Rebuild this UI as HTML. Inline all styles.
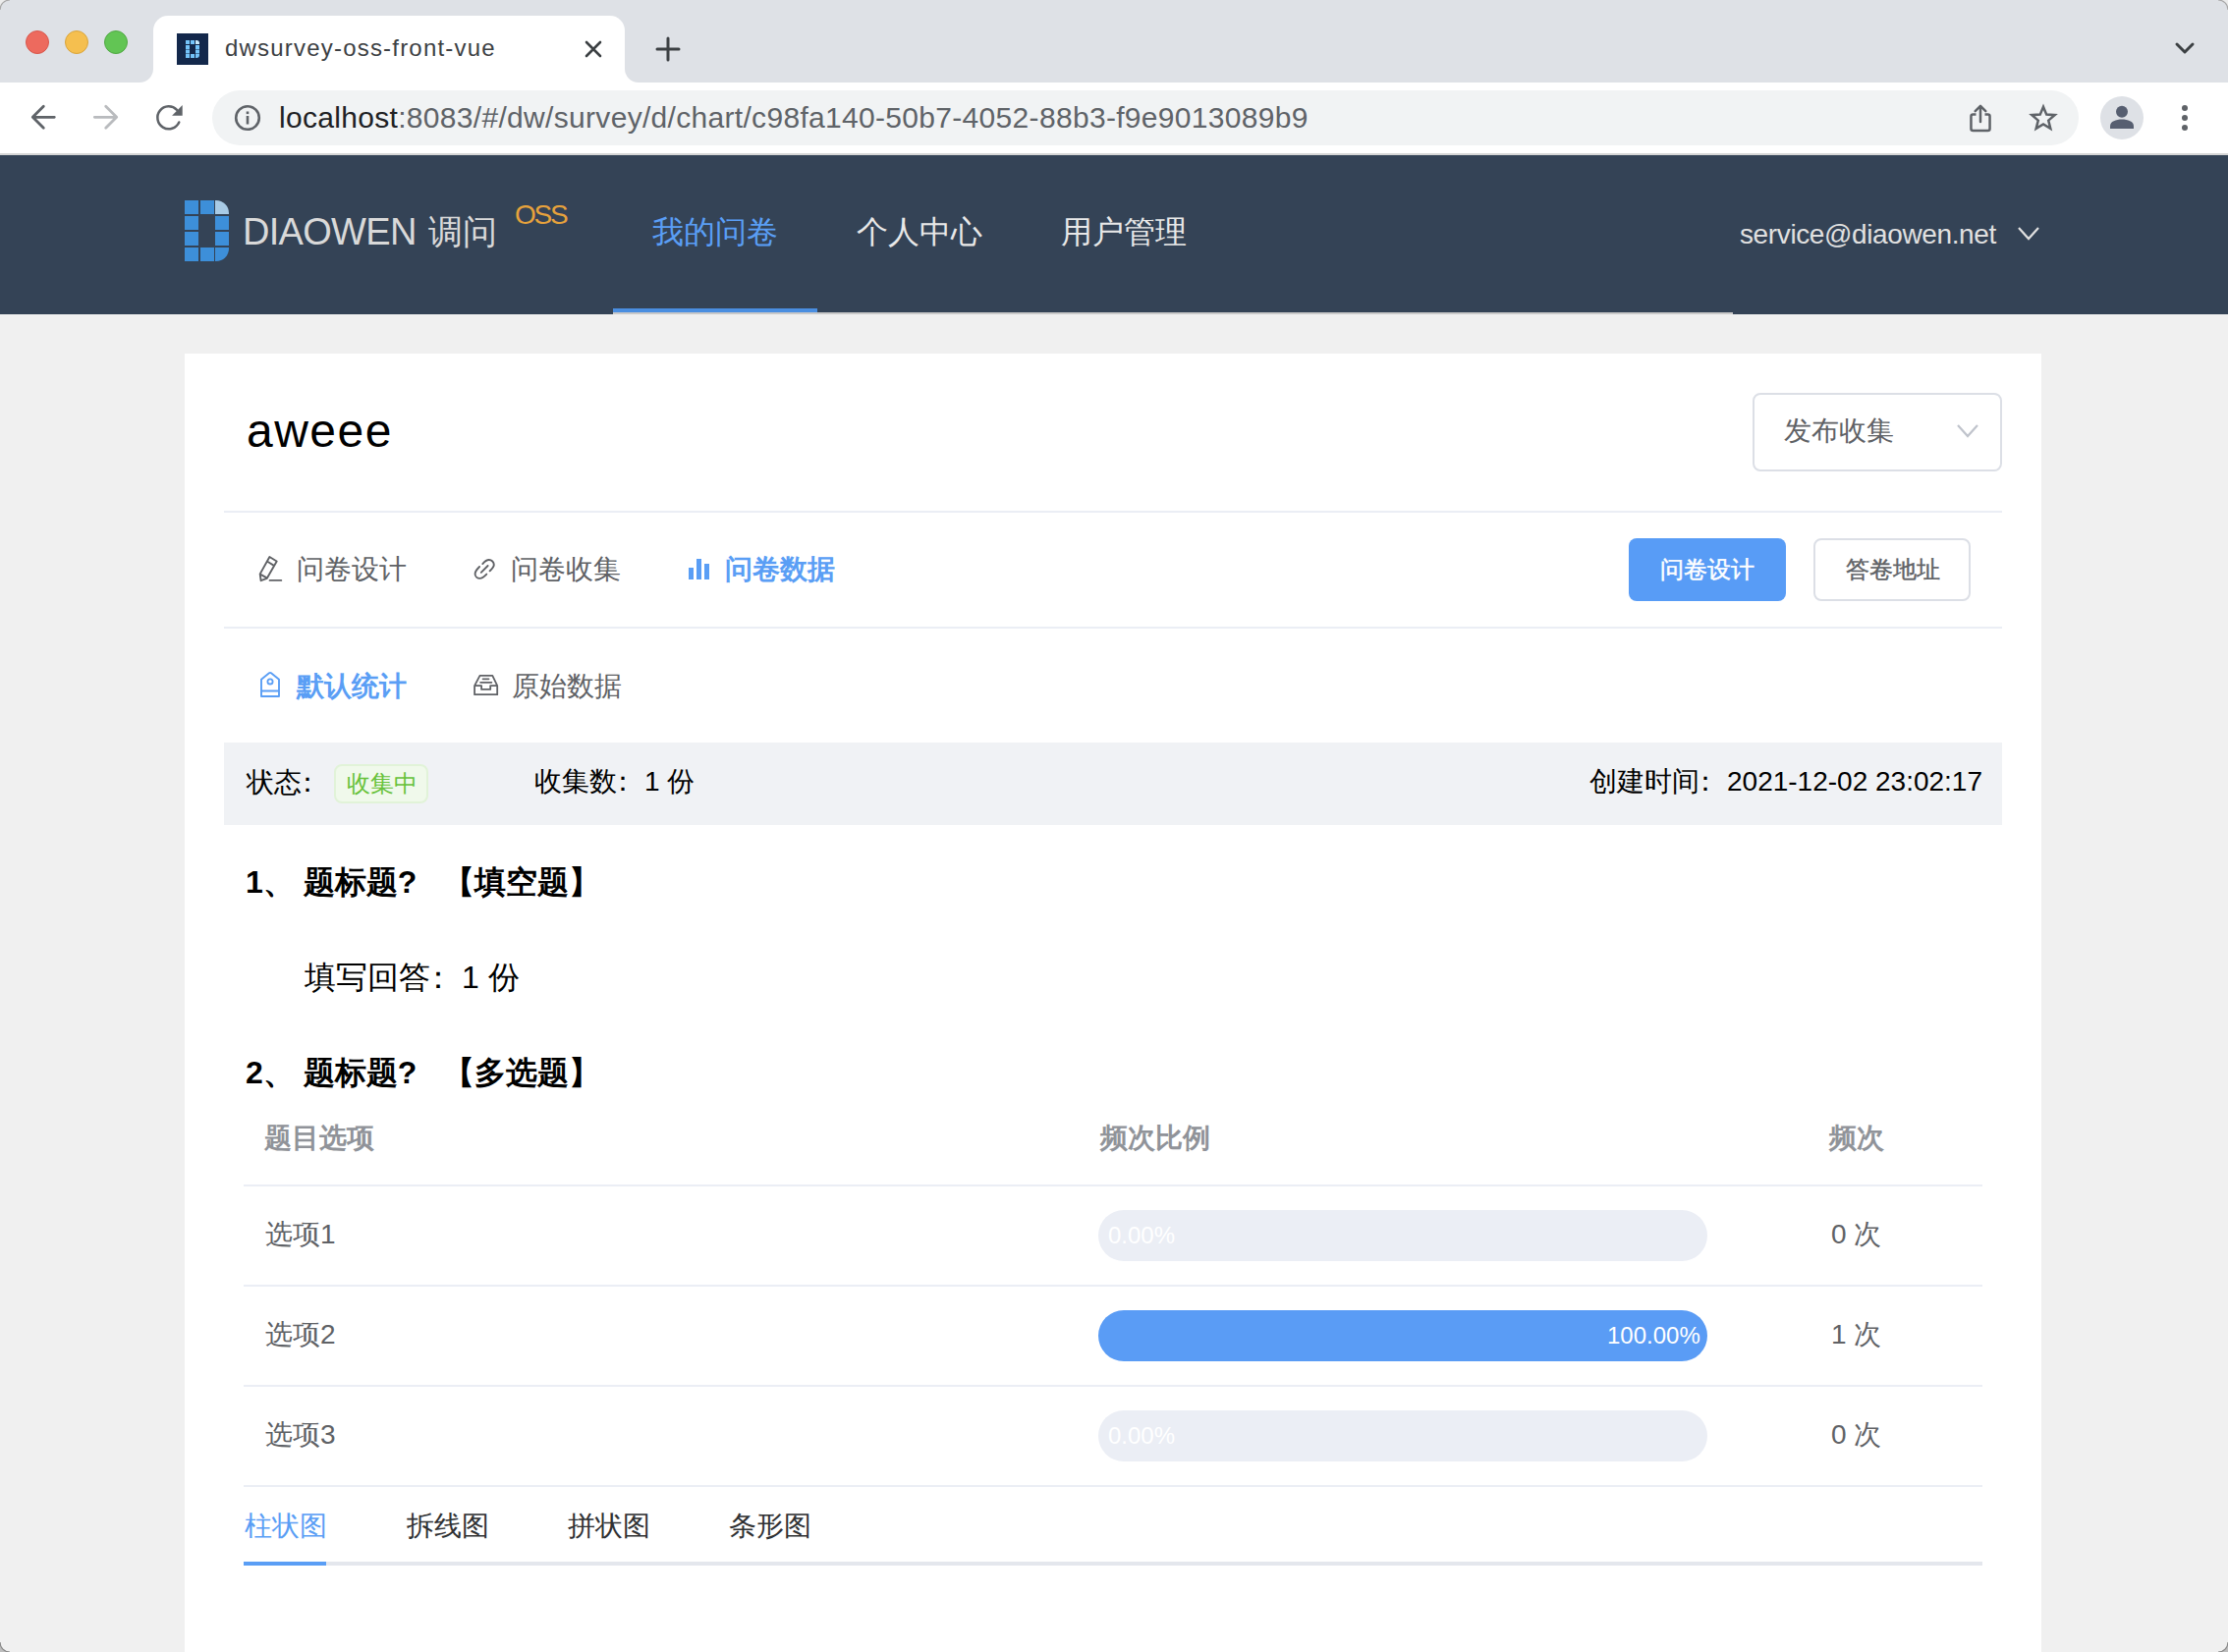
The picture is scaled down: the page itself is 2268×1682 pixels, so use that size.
<!DOCTYPE html>
<html><head><meta charset="utf-8">
<style>
*{margin:0;padding:0;box-sizing:border-box}
html,body{width:2268px;height:1682px;overflow:hidden;background:#f0f0f0;font-family:"Liberation Sans",sans-serif;position:relative}
.a{position:absolute;white-space:nowrap}
#strip{left:0;top:0;width:2268px;height:84px;background:#dee1e6}
#tab{left:156px;top:16px;width:480px;height:68px;background:#fff;border-radius:15px 15px 0 0}
#tabfl{left:142px;top:70px;width:508px;height:14px;background:#fff}
#tabfl:before,#tabfl:after{content:"";position:absolute;top:0;width:14px;height:14px;background:#dee1e6}
#tabfl:before{left:0;border-bottom-right-radius:14px}
#tabfl:after{right:0;border-bottom-left-radius:14px}
.dot{width:24px;height:24px;border-radius:50%;top:31px}
#toolbar{left:0;top:84px;width:2268px;height:72px;background:#fff}
#tbline{left:0;top:156px;width:2268px;height:2px;background:#d6d6d6}
#omni{left:216px;top:92px;width:1900px;height:56px;border-radius:28px;background:#f1f3f4}
#header{left:0;top:158px;width:2268px;height:162px;background:#344356}
#menuline{left:624px;top:318px;width:1140px;height:2px;background:#c9c9c9}
#menuact{left:624px;top:314px;width:208px;height:4px;background:#4a8ee0}
#card{left:188px;top:360px;width:1890px;height:1400px;background:#fff}
.hr{height:2px;background:#ebeef5}
</style></head><body>
<!-- chrome tab strip -->
<div class="a" id="strip"></div>
<div class="a dot" style="left:26px;background:#ed6a5e;border:1px solid #d8574c"></div>
<div class="a dot" style="left:66px;background:#f5bf4f;border:1px solid #d9a53c"></div>
<div class="a dot" style="left:106px;background:#62c554;border:1px solid #50a843"></div>
<div class="a" id="tab"></div>
<div class="a" id="tabfl"></div>
<div class="a" style="left:180px;top:34px;width:32px;height:32px;background:#13284b"></div>
<svg class="a" style="left:180px;top:34px" width="32" height="32" viewBox="0 0 32 32">
 <g fill="#74c4fa">
  <rect x="9" y="7" width="4" height="4"/><rect x="14" y="7" width="4" height="4"/><path d="M19 7h1a3 3 0 0 1 3 3v1h-4z" fill="#c8eafc"/>
  <rect x="9" y="12" width="4" height="4"/><rect x="19" y="12" width="4" height="4"/>
  <rect x="9" y="16.5" width="4" height="4"/><rect x="19" y="16.5" width="4" height="4"/>
  <rect x="9" y="21" width="4" height="4"/><rect x="14" y="21" width="4" height="4"/><path d="M19 21h4v1a3 3 0 0 1-3 3h-1z"/>
 </g>
</svg>
<div class="a" id="ttitle" style="left:229px;top:34px;font-size:24px;line-height:30px;color:#3c4043;letter-spacing:1.2px">dwsurvey-oss-front-vue</div>
<svg class="a" style="left:592px;top:38px" width="24" height="24" viewBox="0 0 24 24"><path d="M5 5L19 19M19 5L5 19" stroke="#3c4043" stroke-width="2.6" stroke-linecap="round"/></svg>
<svg class="a" style="left:666px;top:36px" width="28" height="28" viewBox="0 0 28 28"><path d="M14 3V25M3 14H25" stroke="#3c4043" stroke-width="3" stroke-linecap="round"/></svg>
<svg class="a" style="left:2208px;top:40px" width="32" height="20" viewBox="0 0 32 20"><path d="M8 5L16 13L24 5" fill="none" stroke="#3c4043" stroke-width="3" stroke-linecap="round" stroke-linejoin="round"/></svg>

<!-- toolbar -->
<div class="a" id="toolbar"></div>
<div class="a" id="tbline"></div>
<svg class="a" style="left:28px;top:104px" width="32" height="32" viewBox="0 0 32 32"><path d="M27.3 15.3H6M16.3 4.3L5.3 15.3L16.3 26.3" fill="none" stroke="#5f6368" stroke-width="2.8" stroke-linecap="round" stroke-linejoin="round"/></svg>
<svg class="a" style="left:92px;top:104px" width="32" height="32" viewBox="0 0 32 32"><path d="M4.3 15.3H26M15.7 4.3L26.7 15.3L15.7 26.3" fill="none" stroke="#b9bbbe" stroke-width="2.8" stroke-linecap="round" stroke-linejoin="round"/></svg>
<svg class="a" style="left:156px;top:104px" width="32" height="32" viewBox="0 0 32 32"><path d="M26.26 20.46A11.45 11.45 0 1 1 24.04 7.85" fill="none" stroke="#5f6368" stroke-width="2.5" stroke-linecap="round"/><path d="M29.7 3V13.8H19.1Z" fill="#5f6368"/></svg>
<div class="a" id="omni"></div>
<svg class="a" style="left:238px;top:106px" width="28" height="28" viewBox="0 0 28 28"><circle cx="14" cy="14" r="11.8" fill="none" stroke="#5f6368" stroke-width="2.6"/><rect x="12.7" y="12" width="2.6" height="8.5" fill="#5f6368"/><rect x="12.7" y="7.5" width="2.6" height="2.6" fill="#5f6368"/></svg>
<div class="a" id="url" style="left:284px;top:103px;font-size:30px;line-height:34px;color:#5f6368;letter-spacing:0.31px"><span style="color:#202124">localhost</span>:8083/#/dw/survey/d/chart/c98fa140-50b7-4052-88b3-f9e9013089b9</div>
<svg class="a" style="left:2002px;top:104px" width="30" height="34" viewBox="0 0 30 34"><path d="M9.5 12.6H6.45a2 2 0 0 0-2 2V27a2 2 0 0 0 2 2H21.55a2 2 0 0 0 2-2V14.6a2 2 0 0 0-2-2H18.5" fill="none" stroke="#5f6368" stroke-width="2.5"/><path d="M14 20V4M8.7 9.1L14 3.8L19.3 9.1" fill="none" stroke="#5f6368" stroke-width="2.5" stroke-linecap="round" stroke-linejoin="round"/></svg>
<svg class="a" style="left:2062.7px;top:103.2px" width="34" height="32" viewBox="0 0 34 32"><path d="M17.00 5.70L20.24 13.62L28.70 14.16L22.22 19.65L24.29 27.93L17.00 23.43L9.71 27.93L11.78 19.65L5.30 14.16L13.76 13.62Z" fill="none" stroke="#5f6368" stroke-width="2.5" stroke-linejoin="miter"/></svg>
<div class="a" style="left:2138px;top:98px;width:44px;height:44px;border-radius:50%;background:#dee1e6"></div>
<svg class="a" style="left:2138px;top:98px" width="44" height="44" viewBox="0 0 44 44"><circle cx="22" cy="15.8" r="6" fill="#565e70"/><path d="M10 33V30.5C10 25.5 16 23.5 22 23.5S34 25.5 34 30.5V33Z" fill="#565e70"/></svg>
<svg class="a" style="left:2214px;top:100px" width="20" height="40" viewBox="0 0 20 40"><circle cx="10" cy="10" r="3" fill="#5f6368"/><circle cx="10" cy="20" r="3" fill="#5f6368"/><circle cx="10" cy="30" r="3" fill="#5f6368"/></svg>

<!-- app header -->
<div class="a" id="header"></div>
<svg class="a" style="left:188px;top:204px" width="46" height="62" viewBox="0 0 46 62">
 <g fill="#3d8fd9">
  <rect x="0" y="0" width="14" height="14"/><rect x="16" y="0" width="14" height="14"/>
  <path d="M31 0h1a13 13 0 0 1 13 13v1h-14z" fill="#a8cbe6"/>
  <rect x="0" y="16" width="14" height="14"/><rect x="31" y="16" width="14" height="14"/>
  <rect x="0" y="32" width="14" height="14"/><rect x="31" y="32" width="14" height="14"/>
  <rect x="0" y="48" width="14" height="14"/><rect x="16" y="48" width="14" height="14"/>
  <path d="M31 48h14v1a13 13 0 0 1-13 13h-1z"/>
 </g>
</svg>
<div class="a" id="logot" style="left:247px;top:214px;font-size:38px;line-height:44px;color:#d9d9d9;letter-spacing:-0.7px">DIAOWEN</div><div class="a" id="logocn" style="left:436px;top:216px;font-size:35px;line-height:40px;color:#d9d9d9">调问</div>
<div class="a" id="oss" style="left:524px;top:203px;font-size:28px;line-height:32px;color:#e6a23c;letter-spacing:-2.2px">OSS</div>
<div class="a" id="m1" style="left:664px;top:218px;font-size:32px;line-height:36px;color:#5a9ef5">我的问卷</div>
<div class="a" id="m2" style="left:872px;top:218px;font-size:32px;line-height:36px;color:#e8e8e8">个人中心</div>
<div class="a" id="m3" style="left:1080px;top:218px;font-size:32px;line-height:36px;color:#e8e8e8">用户管理</div>
<div class="a" id="menuline"></div>
<div class="a" id="menuact"></div>
<div class="a" id="email" style="left:1771px;top:223px;font-size:28px;line-height:32px;color:#e0e0e0;letter-spacing:-0.38px">service@diaowen.net</div>
<svg class="a" style="left:2052px;top:228px" width="26" height="20" viewBox="0 0 26 20"><path d="M3 4L13 15L23 4" fill="none" stroke="#e0e0e0" stroke-width="2.2"/></svg>

<!-- card -->
<div class="a" id="card"></div>
<div class="a" id="title" style="left:251px;top:411px;letter-spacing:1.5px;font-size:48px;line-height:56px;color:#000">aweee</div>
<div class="a" style="left:1784px;top:400px;width:254px;height:80px;border:2px solid #dcdfe6;border-radius:8px;background:#fff"></div>
<div class="a" id="pub" style="left:1816px;top:422px;font-size:28px;line-height:34px;color:#606266">发布收集</div>
<svg class="a" style="left:1990px;top:430px" width="26" height="18" viewBox="0 0 26 18"><path d="M3 3L13 14L23 3" fill="none" stroke="#c0c4cc" stroke-width="2.2"/></svg>
<div class="a hr" style="left:228px;top:520px;width:1810px"></div>

<!-- tabs row 1 -->
<svg class="a" style="left:262px;top:565px" width="28" height="30" viewBox="0 0 28 30"><path d="M12.4 2L19.7 6.5L9.8 23.8L3.6 26.2L2.7 19.4Z M10.7 7L16.5 10.6 M2.9 19.6L9.6 23.4" fill="none" stroke="#606266" stroke-width="1.9" stroke-linejoin="round"/><path d="M12.6 25.9H24.3" stroke="#606266" stroke-width="1.9" stroke-linecap="round"/></svg>
<div class="a" id="t1" style="left:302px;top:563px;font-size:28px;line-height:34px;color:#606266">问卷设计</div>
<svg class="a" style="left:480px;top:566px" width="26" height="26" viewBox="0 0 26 26"><path d="M11.3 8.1C13.5 5.5 15.5 4 17.8 4C20.5 4 22.8 6.3 22.8 9C22.8 11.5 20.5 13.5 18.6 15.3 M8.1 11C5.8 13.3 3.6 15.5 3.6 18.2C3.6 20.8 5.8 22.9 8.5 22.9C11 22.9 13.5 20.5 15.3 18.6 M9.8 16.8L16.6 10" fill="none" stroke="#606266" stroke-width="1.9" stroke-linecap="round"/></svg>
<div class="a" id="t2" style="left:520px;top:563px;font-size:28px;line-height:34px;color:#606266">问卷收集</div>
<svg class="a" style="left:700px;top:568px" width="24" height="24" viewBox="0 0 24 24"><rect x="1" y="10" width="5" height="12" fill="#5a9ef5"/><rect x="9" y="1" width="5" height="21" fill="#5a9ef5"/><rect x="17" y="6" width="5" height="16" fill="#5a9ef5"/></svg>
<div class="a" id="t3" style="left:738px;top:563px;font-size:28px;line-height:34px;color:#5a9ef5;font-weight:bold">问卷数据</div>
<div class="a" style="left:1658px;top:548px;width:160px;height:64px;border-radius:8px;background:#589cf6"></div>
<div class="a" id="b1" style="left:1690px;top:563px;font-size:24px;line-height:34px;color:#fff;-webkit-text-stroke:0.5px #fff">问卷设计</div>
<div class="a" style="left:1846px;top:548px;width:160px;height:64px;border-radius:8px;border:2px solid #dcdfe6;background:#fff"></div>
<div class="a" id="b2" style="left:1879px;top:563px;font-size:24px;line-height:34px;color:#606266;-webkit-text-stroke:0.4px #606266">答卷地址</div>
<div class="a hr" style="left:228px;top:638px;width:1810px"></div>

<!-- tabs row 2 -->
<svg class="a" style="left:262px;top:682px" width="26" height="30" viewBox="0 0 26 30"><path d="M4 27V9.8L12 3.3Q13 2.6 14 3.3L22 9.8V27Z M4 21.5H22" fill="none" stroke="#5a9ef5" stroke-width="1.9" stroke-linejoin="round"/><circle cx="13" cy="11.9" r="2.6" fill="none" stroke="#5a9ef5" stroke-width="1.8"/></svg>
<div class="a" id="s1" style="left:302px;top:682px;font-size:28px;line-height:34px;color:#5a9ef5;font-weight:bold">默认统计</div>
<svg class="a" style="left:480px;top:684px" width="30" height="26" viewBox="0 0 30 26"><path d="M3.1 14.1L8.5 3.8H21.3L26.2 14.1V23.2H3.1Z M3.1 14.1H10.1V17.9H19.2V14.1H26.2 M11.6 7.3H17.5 M9.1 10.8H20.4" fill="none" stroke="#606266" stroke-width="1.8" stroke-linejoin="round" stroke-linecap="round"/></svg>
<div class="a" id="s2" style="left:521px;top:682px;font-size:28px;line-height:34px;color:#606266">原始数据</div>

<!-- status -->
<div class="a" style="left:228px;top:756px;width:1810px;height:84px;background:#f0f2f5"></div>
<div class="a" id="st1" style="left:251px;top:780px;font-size:28px;line-height:34px;color:#000">状态<span style="position:relative;left:-8px">：</span></div>
<div class="a" style="left:340px;top:778px;width:96px;height:40px;border:2px solid #e1f3d8;border-radius:8px;background:#f0f9eb"></div>
<div class="a" id="tag" style="left:353px;top:782px;font-size:24px;line-height:32px;color:#67c23a">收集中</div>
<div class="a" id="st2" style="left:544px;top:779px;font-size:28px;line-height:34px;color:#000">收集数<span style="position:relative;left:-8px">：</span>1 份</div>
<div class="a" id="st3" style="left:1618px;top:779px;font-size:28px;line-height:34px;color:#000">创建时间<span style="position:relative;left:-8px">：</span>2021-12-02 23:02:17</div>

<!-- q1 -->
<div class="a" id="q1" style="left:250px;top:880px;font-size:32px;line-height:36px;color:#000;font-weight:bold">1、 题标题? &nbsp;&nbsp;【填空题】</div>
<div class="a" id="q1a" style="left:310px;top:977px;font-size:32px;line-height:36px;color:#000">填写回答<span style="position:relative;left:-8px">：</span>1 份</div>

<!-- q2 -->
<div class="a" id="q2" style="left:250px;top:1074px;font-size:32px;line-height:36px;color:#000;font-weight:bold">2、 题标题? &nbsp;&nbsp;【多选题】</div>
<div class="a" id="th1" style="left:269px;top:1142px;font-size:28px;line-height:34px;color:#909399;font-weight:bold">题目选项</div>
<div class="a" id="th2" style="left:1120px;top:1142px;font-size:28px;line-height:34px;color:#909399;font-weight:bold">频次比例</div>
<div class="a" id="th3" style="left:1862px;top:1142px;font-size:28px;line-height:34px;color:#909399;font-weight:bold">频次</div>
<div class="a hr" style="left:248px;top:1206px;width:1770px"></div>
<div class="a" id="r1" style="left:270px;top:1240px;font-size:28px;line-height:34px;color:#606266">选项1</div>
<div class="a" style="left:1118px;top:1232px;width:620px;height:52px;border-radius:26px;background:#ebeef5"></div>
<div class="a" id="p1" style="left:1128px;top:1242px;font-size:24px;line-height:32px;color:#fff">0.00%</div>
<div class="a" id="c1" style="left:1864px;top:1240px;font-size:28px;line-height:34px;color:#606266">0 次</div>
<div class="a hr" style="left:248px;top:1308px;width:1770px"></div>
<div class="a" id="r2" style="left:270px;top:1342px;font-size:28px;line-height:34px;color:#606266">选项2</div>
<div class="a" style="left:1118px;top:1334px;width:620px;height:52px;border-radius:26px;background:#5a9cf5"></div>
<div class="a" id="p2" style="left:1636px;top:1344px;font-size:24px;line-height:32px;color:#fff">100.00%</div>
<div class="a" id="c2" style="left:1864px;top:1342px;font-size:28px;line-height:34px;color:#606266">1 次</div>
<div class="a hr" style="left:248px;top:1410px;width:1770px"></div>
<div class="a" id="r3" style="left:270px;top:1444px;font-size:28px;line-height:34px;color:#606266">选项3</div>
<div class="a" style="left:1118px;top:1436px;width:620px;height:52px;border-radius:26px;background:#ebeef5"></div>
<div class="a" id="p3" style="left:1128px;top:1446px;font-size:24px;line-height:32px;color:#fff">0.00%</div>
<div class="a" id="c3" style="left:1864px;top:1444px;font-size:28px;line-height:34px;color:#606266">0 次</div>
<div class="a hr" style="left:248px;top:1512px;width:1770px"></div>

<!-- chart tabs -->
<div class="a" id="ct1" style="left:249px;top:1537px;font-size:28px;line-height:34px;color:#5a9ef5">柱状图</div>
<div class="a" id="ct2" style="left:414px;top:1537px;font-size:28px;line-height:34px;color:#303133">拆线图</div>
<div class="a" id="ct3" style="left:578px;top:1537px;font-size:28px;line-height:34px;color:#303133">拼状图</div>
<div class="a" id="ct4" style="left:742px;top:1537px;font-size:28px;line-height:34px;color:#303133">条形图</div>
<div class="a" style="left:248px;top:1590px;width:1770px;height:4px;background:#e4e7ed"></div>
<div class="a" style="left:248px;top:1590px;width:84px;height:4px;background:#5a9ef5"></div>

<svg class="a" style="left:0;top:0" width="12" height="12" viewBox="0 0 12 12"><path d="M0 0H10A10 10 0 0 0 0 10Z" fill="#ececec"/><path d="M0 10A10 10 0 0 1 10 0" fill="none" stroke="#a8a8a8" stroke-width="1.2"/></svg>
<svg class="a" style="left:2256px;top:0" width="12" height="12" viewBox="0 0 12 12"><path d="M12 0H2A10 10 0 0 1 12 10Z" fill="#ececec"/><path d="M2 0A10 10 0 0 1 12 10" fill="none" stroke="#a8a8a8" stroke-width="1.2"/></svg>
<svg class="a" style="left:0;top:1670px" width="12" height="12" viewBox="0 0 12 12"><path d="M0 12H10A10 10 0 0 1 0 2Z" fill="#bdbdbd"/><path d="M0 2A10 10 0 0 0 10 12" fill="none" stroke="#888" stroke-width="1.2"/></svg>
<svg class="a" style="left:2256px;top:1670px" width="12" height="12" viewBox="0 0 12 12"><path d="M12 12H2A10 10 0 0 0 12 2Z" fill="#bdbdbd"/><path d="M12 2A10 10 0 0 1 2 12" fill="none" stroke="#888" stroke-width="1.2"/></svg>
</body></html>
